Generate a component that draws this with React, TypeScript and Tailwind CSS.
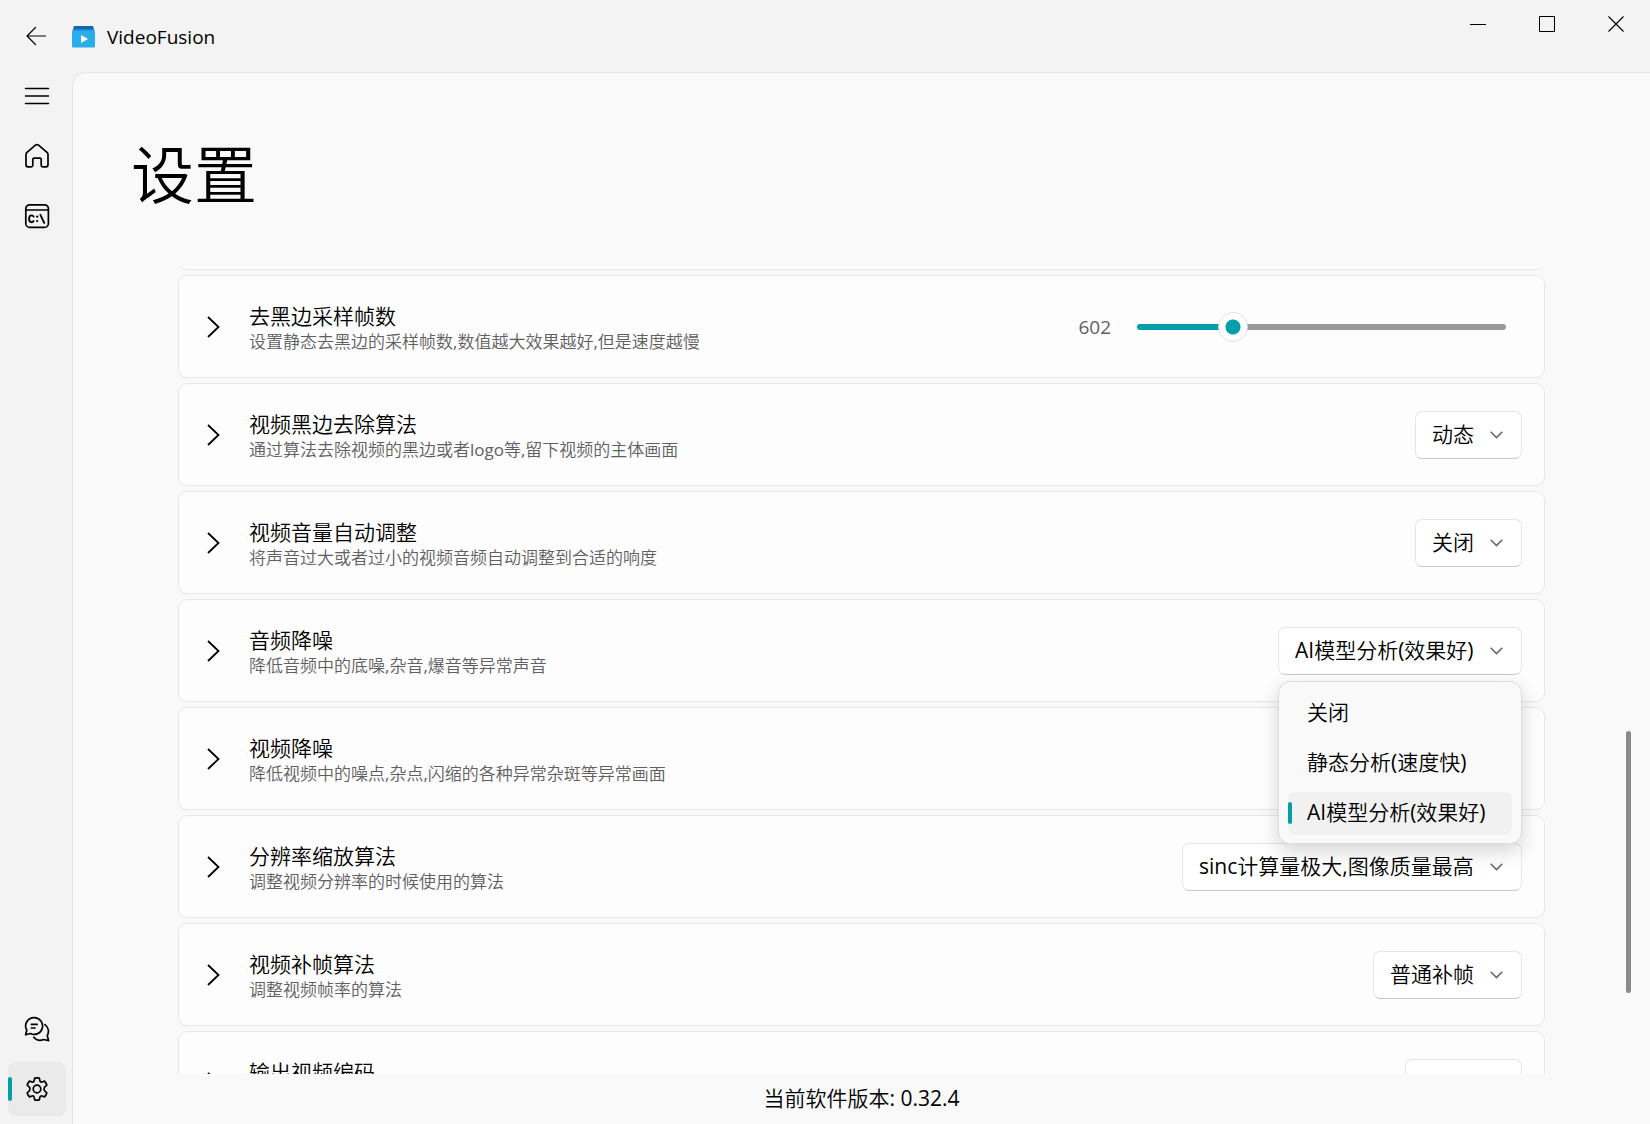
import { useState } from "react";
import type { ReactNode } from "react";

type Setting = {
  title: string;
  desc: string;
  options: string[];
};

const settings: Setting[] = [
  {
    title: "视频黑边去除算法",
    desc: "通过算法去除视频的黑边或者logo等,留下视频的主体画面",
    options: ["动态", "静态", "关闭"],
  },
  {
    title: "视频音量自动调整",
    desc: "将声音过大或者过小的视频音频自动调整到合适的响度",
    options: ["关闭"],
  },
];

const moreSettings: Setting[] = [
  {
    title: "分辨率缩放算法",
    desc: "调整视频分辨率的时候使用的算法",
    options: ["sinc计算量极大,图像质量最高"],
  },
  {
    title: "视频补帧算法",
    desc: "调整视频帧率的算法",
    options: ["普通补帧"],
  },
  {
    title: "输出视频编码",
    desc: "输出视频的编码格式",
    options: ["H264"],
  },
];

const noiseOptions = ["关闭", "静态分析(速度快)", "AI模型分析(效果好)"];

const NavButton = ({
  label,
  active,
  children,
}: {
  label: string;
  active?: boolean;
  children: ReactNode;
}) => (
  <button
    aria-label={label}
    className={
      active
        ? "relative flex h-[54px] w-[58px] items-center justify-center rounded-lg bg-[#eaeaea]"
        : "relative flex h-[54px] w-[58px] items-center justify-center rounded-lg"
    }
  >
    {active && (
      <span className="absolute left-0 h-6 w-1 rounded-full bg-[#009faa]" />
    )}
    <svg
      width="26"
      height="26"
      viewBox="0 0 26 26"
      fill="none"
      stroke="#000"
      strokeWidth="1.7"
      strokeLinecap="round"
      strokeLinejoin="round"
    >
      {children}
    </svg>
  </button>
);

const Sidebar = () => (
  <nav className="flex w-[72px] shrink-0 flex-col gap-1.5 pt-[9px] pb-2 pl-2">
    <NavButton label="返回">
      <path d="M21.5 13H3.5M11.5 4.5L3 13l8.5 8.5" strokeWidth="1.2" />
    </NavButton>
    <NavButton label="菜单">
      <path d="M1.5 5.5h23M1.5 13h23M1.5 20.5h23" strokeWidth="1.5" />
    </NavButton>
    <NavButton label="主页">
      <path d="M11.4 2.2L3 9.4c-.7.6-1 1.3-1 2.2v10.2c0 1.2.8 2 2 2h3.2c1 0 1.6-.6 1.6-1.6v-5.6c0-.9.6-1.4 1.4-1.4h5.6c.8 0 1.4.5 1.4 1.4v5.6c0 1 .6 1.6 1.6 1.6H22c1.2 0 2-.8 2-2V11.6c0-.9-.3-1.6-1-2.2l-8.4-7.2c-1-.8-2.2-.8-3.2 0z" />
    </NavButton>
    <NavButton label="命令行">
      <rect x="1.8" y="1.8" width="22.6" height="22.6" rx="4" />
      <path d="M2 7h22.2" />
      <path
        d="M9.6 13.6c-.5-.8-1.2-1.2-2-1.2-1.6 0-2.5 1.3-2.5 3.4s.9 3.4 2.5 3.4c.8 0 1.5-.4 2-1.2M16.4 11.8l3.8 8"
        strokeWidth="1.9"
      />
      <path d="M13.2 13.6v.1M13.2 18v.1" strokeWidth="2.2" />
    </NavButton>
    <div className="flex-1" />
    <NavButton label="反馈">
      <path d="M10.2 1.6a8.4 8.4 0 1 1-3.8 15.9L1.6 18.8l1.2-4.6A8.4 8.4 0 0 1 10.2 1.6z" />
      <path d="M7.4 8.4h5.8M7.4 12h3.6" />
      <path d="M21 8.6a8.2 8.2 0 0 1 2.2 11l1.4 5-5-1.1a8.4 8.4 0 0 1-9.8-2.3" />
    </NavButton>
    <NavButton label="设置" active>
      <path d="M10.7 2.1a11 11 0 0 1 4.6 0l.6 2.7c.2.9 1.1 1.4 2 1.2l2.6-.9a11 11 0 0 1 2.3 4l-2 1.9c-.7.6-.7 1.4-.7 2s0 1.4.7 2l2 1.9a11 11 0 0 1-2.3 4l-2.6-.9c-.9-.2-1.8.3-2 1.2l-.6 2.7a11 11 0 0 1-4.6 0l-.6-2.7c-.2-.9-1.1-1.4-2-1.2l-2.6.9a11 11 0 0 1-2.3-4l2-1.9c.7-.6.7-1.4.7-2s0-1.4-.7-2l-2-1.9a11 11 0 0 1 2.3-4l2.6.9c.9.2 1.8-.3 2-1.2z" />
      <circle cx="13" cy="13" r="3.8" />
    </NavButton>
  </nav>
);

const TitleBar = () => (
  <header className="flex h-[72px] shrink-0 items-start">
    <div className="flex h-[72px] flex-1 items-center gap-3 pt-0.5">
      <svg width="23" height="22" viewBox="0 0 23 22">
        <path d="M2 0h19l1.5 5h-22z" fill="#1766b0" />
        <path d="M1.5 3h20l1 4H.5z" fill="#1b86d4" />
        <rect y="4.5" width="23" height="17" rx="1.5" fill="#2aaeeb" />
        <path d="M9 9v8l7-4z" fill="#fff" />
      </svg>
      <h1 className="text-[19px]">VideoFusion</h1>
    </div>
    <button
      aria-label="最小化"
      className="flex h-12 w-[69px] items-center justify-center"
    >
      <svg width="16" height="16" viewBox="0 0 16 16" stroke="#000">
        <path d="M0 8.5h16" />
      </svg>
    </button>
    <button
      aria-label="最大化"
      className="flex h-12 w-[69px] items-center justify-center"
    >
      <svg width="16" height="16" viewBox="0 0 16 16" stroke="#000">
        <path d="M.5.5h15v15H.5z" fill="none" />
      </svg>
    </button>
    <button
      aria-label="关闭"
      className="flex h-12 w-[69px] items-center justify-center"
    >
      <svg width="16" height="16" viewBox="0 0 16 16" stroke="#000">
        <path d="M.5.5l15 15M15.5.5l-15 15" strokeWidth="1.2" />
      </svg>
    </button>
  </header>
);

const Card = ({
  title,
  desc,
  children,
}: {
  title: string;
  desc: string;
  children?: ReactNode;
}) => (
  <section className="flex h-[103px] shrink-0 items-center rounded-[9px] border border-[#e8e8e8] bg-[#fdfdfd] pr-[22px] pl-7">
    <button aria-label={"展开" + title} className="mr-[29px]">
      <svg
        width="13"
        height="22"
        viewBox="0 0 13 22"
        fill="none"
        stroke="#000"
        strokeWidth="1.8"
      >
        <path d="M1 1l10.5 10L1 21" />
      </svg>
    </button>
    <div className="flex-1 pt-0.5">
      <h3 className="text-[21px] leading-7">{title}</h3>
      <p className="text-[17px] leading-[23px] text-[#606060]">{desc}</p>
    </div>
    {children}
  </section>
);

const SelectBox = ({
  label,
  options,
  value,
  onChange,
  children,
}: {
  label: string;
  options: string[];
  value: string;
  onChange: (value: string) => void;
  children?: ReactNode;
}) => (
  <div className="relative flex items-center">
    <select
      aria-label={label}
      value={value}
      onChange={(e) => onChange(e.target.value)}
      className="h-12 appearance-none rounded-[7px] border border-[#e5e5e5] border-b-[#c8c8c8] bg-white pr-[47px] pl-4 text-[21px]"
    >
      {options.map((option) => (
        <option key={option}>{option}</option>
      ))}
    </select>
    <svg
      className="pointer-events-none absolute right-[19px]"
      width="13"
      height="8"
      viewBox="0 0 13 8"
      fill="none"
      stroke="#666"
      strokeWidth="1.5"
    >
      <path d="M.7.8l5.8 5.8L12.3.8" />
    </svg>
    {children}
  </div>
);

const SelectCard = ({ title, desc, options }: Setting) => {
  const [value, setValue] = useState(options[0]);
  return (
    <Card title={title} desc={desc}>
      <SelectBox
        label={title}
        options={options}
        value={value}
        onChange={setValue}
      />
    </Card>
  );
};

const SliderCard = () => {
  const [frames, setFrames] = useState(602);
  const min = 10;
  const max = 2500;
  const percent = ((frames - min) / (max - min)) * 100;
  return (
    <Card
      title="去黑边采样帧数"
      desc="设置静态去黑边的采样帧数,数值越大效果越好,但是速度越慢"
    >
      <label
        htmlFor="frames"
        className="mr-[26px] pt-0.5 text-[19px] text-[#606060]"
      >
        {frames}
      </label>
      <input
        id="frames"
        type="range"
        min={min}
        max={max}
        value={frames}
        onChange={(e) => setFrames(Number(e.target.value))}
        style={{
          background: `linear-gradient(to right, #009faa ${percent}%, #999 ${percent}%)`,
        }}
        className="mr-4 h-1.5 w-[369px] appearance-none rounded-full [&::-webkit-slider-thumb]:size-[30px] [&::-webkit-slider-thumb]:appearance-none [&::-webkit-slider-thumb]:rounded-full [&::-webkit-slider-thumb]:border [&::-webkit-slider-thumb]:border-[#e0e0e0] [&::-webkit-slider-thumb]:bg-[radial-gradient(circle,#009faa_7px,#fff_8px)]"
      />
    </Card>
  );
};

const AudioNoiseCard = () => {
  const [value, setValue] = useState(noiseOptions[2]);
  return (
    <Card title="音频降噪" desc="降低音频中的底噪,杂音,爆音等异常声音">
      <SelectBox
        label="音频降噪"
        options={noiseOptions}
        value={value}
        onChange={setValue}
      >
        <ul className="absolute top-[54px] right-0 left-0 z-10 flex flex-col gap-[7px] rounded-xl border border-[#dcdcdc] bg-[#f9f9f9] px-[9px] pt-[10px] pb-2 shadow-[0_8px_20px_rgba(0,0,0,0.16)]">
          {noiseOptions.map((option) => (
            <li key={option}>
              <button
                onClick={() => setValue(option)}
                className={
                  option === value
                    ? "relative flex h-[43px] w-full items-center rounded-lg bg-[#f1f1f1] pl-[19px] text-[21px] whitespace-nowrap"
                    : "relative flex h-[43px] w-full items-center rounded-lg pl-[19px] text-[21px] whitespace-nowrap"
                }
              >
                {option === value && (
                  <span className="absolute left-0 h-[22px] w-1 rounded-full bg-[#009faa]" />
                )}
                {option}
              </button>
            </li>
          ))}
        </ul>
      </SelectBox>
    </Card>
  );
};

const App = () => {
  return (
    <div className="flex h-screen overflow-hidden bg-[#f3f3f3] font-['Open_Sans','Noto_Sans_CJK_SC_DemiLight','Noto_Sans_CJK_SC',sans-serif] text-black">
      <Sidebar />
      <div className="flex min-w-0 flex-1 flex-col">
        <TitleBar />
        <main className="flex min-h-0 flex-1 flex-col rounded-tl-[14px] border-t border-l border-[#e5e5e5] bg-[#f9f9f9]">
          <h2 className="h-[193px] shrink-0 pt-[57px] pl-[58px] text-[63px] leading-[88px]">
            设置
          </h2>
          <div className="flex min-h-0 flex-1 overflow-hidden pl-[105px]">
            <div className="flex min-w-0 flex-1 flex-col gap-[5px]">
              {/* scrolled past, only the lower edge stays in view */}
              <div className="-mt-[99px] h-[103px] shrink-0 rounded-[9px] border border-[#e8e8e8] bg-[#fdfdfd]" />
              <SliderCard />
              {settings.map((item) => (
                <SelectCard key={item.title} {...item} />
              ))}
              <AudioNoiseCard />
              <Card
                title="视频降噪"
                desc="降低视频中的噪点,杂点,闪缩的各种异常杂斑等异常画面"
              />
              {moreSettings.map((item) => (
                <SelectCard key={item.title} {...item} />
              ))}
            </div>
            <div className="flex w-[105px] shrink-0 flex-col items-end pr-[19px]">
              <div className="flex-[464]" />
              <div className="w-[5px] flex-[261] rounded-full bg-[#8a8a8a]" />
              <div className="flex-[81]" />
            </div>
          </div>
          <footer className="flex h-[50px] shrink-0 items-center justify-center text-[21px]">
            当前软件版本: 0.32.4
          </footer>
        </main>
      </div>
    </div>
  );
};

export default App;
